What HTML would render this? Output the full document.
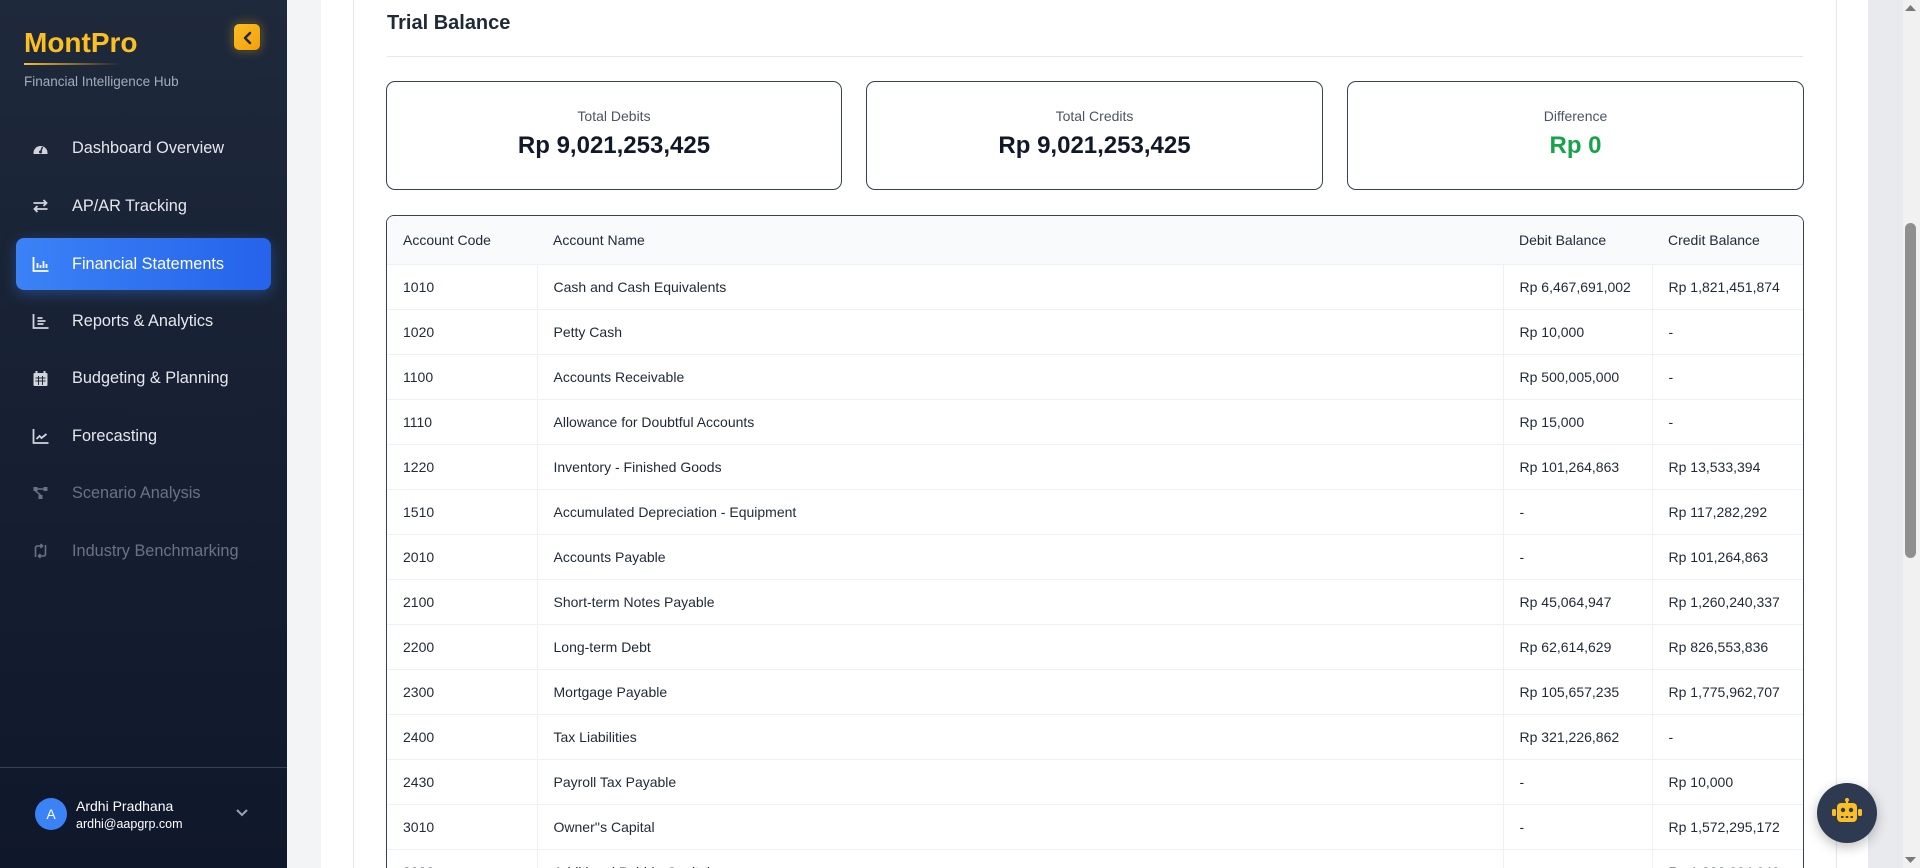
<!DOCTYPE html>
<html><head><meta charset="utf-8"><style>
*{margin:0;padding:0;box-sizing:border-box}
html{width:1920px;height:868px;overflow:hidden}
body{width:1920px;height:868px;overflow:hidden;font-family:"Liberation Sans",Arial,sans-serif;background:#f3f4f6;position:relative}
.sb{position:absolute;left:0;top:0;width:287px;height:868px;background:linear-gradient(180deg,#1e293b 0%,#172033 50%,#0f172a 100%)}
.logo{position:absolute;left:24px;top:27px;font-size:28px;font-weight:bold;color:#fbbf24}
.uline{position:absolute;left:24px;top:63px;width:96px;height:2px;background:linear-gradient(90deg,#fbbf24,rgba(251,191,36,0))}
.sub{position:absolute;left:24px;top:74px;font-size:13.5px;color:#a3acb9}
.tog{position:absolute;left:233px;top:23px;width:28px;height:28px;border-radius:6px;background:linear-gradient(135deg,#fbbf24,#f59e0b);box-shadow:0 0 10px rgba(251,191,36,.35);border:1px solid #3a3a2a}
.nav{position:absolute;left:16px;width:255px;height:52px;display:flex;align-items:center;font-size:16.3px;color:#e5e7eb}
.nav svg{position:absolute;left:16px;top:18px}
.nav span{position:absolute;left:56px}
.nav.act{background:linear-gradient(90deg,#3b82f6,#2563eb);border-radius:8px;color:#fff;box-shadow:0 4px 14px rgba(59,130,246,.35)}
.nav.dim{color:#6b7280}
.div{position:absolute;left:0;top:767px;width:287px;height:1px;background:#334155}
.av{position:absolute;left:35px;top:798px;width:32px;height:32px;border-radius:50%;background:#3b82f6;color:#fff;font-size:14px;text-align:center;line-height:32px}
.nm{position:absolute;left:76px;top:798px;font-size:14px;color:#fff}
.em{position:absolute;left:76px;top:817px;font-size:12.5px;color:#fff}
.panel{position:absolute;left:321px;top:0;width:1547px;height:868px;background:#fff}
.card{position:absolute;left:353px;top:0;width:1484px;height:868px;background:#fff;border-left:1px solid #e5e7eb;border-right:1px solid #e5e7eb}
.title{position:absolute;left:387px;top:12px;font-size:20px;font-weight:bold;color:#1f2937}
.hr{position:absolute;left:387px;top:56px;width:1416px;height:1px;background:#e5e7eb}
.stat{position:absolute;top:81px;height:109px;border:1px solid #374151;border-radius:9px;text-align:center}
.stat .l{margin-top:26px;font-size:14px;color:#4b5563}
.stat .v{margin-top:8px;font-size:24px;font-weight:bold;color:#111827}
.tbl{position:absolute;left:386px;top:215px;width:1418px;height:653px;border:1px solid #374151;border-bottom:none;border-radius:8px 8px 0 0;overflow:hidden}
table{border-collapse:collapse;width:100%;font-size:14px;color:#1f2937}
th{height:48px;background:#f8fafc;font-weight:normal;text-align:left;color:#1f2937;padding-left:16px}
td{height:45px;border-top:1px solid #eef0f3;padding-left:16px}
td+td{border-left:1px solid #eef0f3}
.bot{position:absolute;left:1817px;top:783px;width:60px;height:60px;border-radius:50%;background:#2d3a50;box-shadow:0 4px 12px rgba(0,0,0,.25)}
.gs{position:absolute;left:1868px;top:0;width:35px;height:868px;background:#e9eaee}
.scr{position:absolute;left:1903px;top:0;width:17px;height:868px;background:#f1f1f1}
.thumb{position:absolute;left:1905px;top:223px;width:11px;height:335px;border-radius:6px;background:#8f8f8f}
</style></head><body>
<div class="sb">
<div class="logo">MontPro</div><div class="uline"></div>
<div class="sub">Financial Intelligence Hub</div>
<div class="tog"><svg width="28" height="28" viewBox="0 0 28 28"><path d="M16 9l-5 5 5 5" fill="none" stroke="#1f2937" stroke-width="2.5" stroke-linecap="round" stroke-linejoin="round"/></svg></div>

<div class="nav" style="top:122px"><svg width="17" height="16" viewBox="0 0 16 16"><path d="M1 13A7 7 0 0 1 15 13L15 14H1Z" fill="#d1d5db"/><circle cx="8" cy="12" r="1.5" fill="#1e293b"/><path d="M8 12L10 7" stroke="#1e293b" stroke-width="1.5"/></svg><span>Dashboard Overview</span></div>
<div class="nav" style="top:180px"><svg width="17" height="16" viewBox="0 0 16 16"><path d="M1 5H14M11 2l3 3-3 3M15 11H2M5 8l-3 3 3 3" fill="none" stroke="#d1d5db" stroke-width="1.8"/></svg><span>AP/AR Tracking</span></div>
<div class="nav act" style="top:238px"><svg width="17" height="16" viewBox="0 0 16 16"><path d="M1 1V15H16" fill="none" stroke="#fff" stroke-width="1.8"/><path d="M5 7V12M8 9V12M11 5V12M14 8V12" stroke="#fff" stroke-width="1.8"/></svg><span>Financial Statements</span></div>
<div class="nav" style="top:295px"><svg width="17" height="16" viewBox="0 0 16 16"><path d="M1 1V15H16M5 5H10M5 8H13M5 11H11" fill="none" stroke="#d1d5db" stroke-width="1.8"/></svg><span>Reports &amp; Analytics</span></div>
<div class="nav" style="top:352px"><svg width="17" height="16" viewBox="0 0 16 16"><rect x="1" y="3" width="14" height="13" rx="1" fill="#d1d5db"/><path d="M4 1V4M12 1V4" stroke="#d1d5db" stroke-width="2"/><path d="M3 8H13M3 11H13M6 6V15M10 6V15" stroke="#1e293b" stroke-width="1"/></svg><span>Budgeting &amp; Planning</span></div>
<div class="nav" style="top:410px"><svg width="17" height="16" viewBox="0 0 16 16"><path d="M1 1V15H16" fill="none" stroke="#d1d5db" stroke-width="1.8"/><path d="M4 11L7 8 9 10 14 6" fill="none" stroke="#d1d5db" stroke-width="1.8"/></svg><span>Forecasting</span></div>
<div class="nav dim" style="top:467px"><svg width="17" height="16" viewBox="0 0 16 16"><rect x="1" y="2" width="4" height="4" fill="#6b7280"/><rect x="11" y="2" width="4" height="4" fill="#6b7280"/><rect x="6" y="10" width="4" height="4" fill="#6b7280"/><path d="M5 4H11M3 6L8 10" stroke="#6b7280" stroke-width="1.5"/></svg><span>Scenario Analysis</span></div>
<div class="nav dim" style="top:525px"><svg width="17" height="16" viewBox="0 0 16 16"><path d="M3 14V5Q3 3 5 3H10M8 1l2 2-2 2M13 2V11Q13 13 11 13H6M8 15l-2-2 2-2" fill="none" stroke="#6b7280" stroke-width="1.6"/></svg><span>Industry Benchmarking</span></div>
<div class="div"></div>
<div class="av">A</div>
<div class="nm">Ardhi Pradhana</div>
<div class="em">ardhi@aapgrp.com</div>
<svg style="position:absolute;left:235px;top:808px" width="14" height="10" viewBox="0 0 14 10"><path d="M2 2l5 5 5-5" fill="none" stroke="#9ca3af" stroke-width="2"/></svg>
</div>

<div class="panel"></div>
<div class="card"></div>
<div class="title">Trial Balance</div>
<div class="hr"></div>
<div class="stat" style="left:386px;width:456px"><div class="l">Total Debits</div><div class="v">Rp 9,021,253,425</div></div>
<div class="stat" style="left:866px;width:457px"><div class="l">Total Credits</div><div class="v">Rp 9,021,253,425</div></div>
<div class="stat" style="left:1347px;width:457px"><div class="l">Difference</div><div class="v" style="color:#16a34a">Rp 0</div></div>

<div class="tbl"><table>
<colgroup><col style="width:150px"><col style="width:966px"><col style="width:149px"><col></colgroup>
<tr><th>Account Code</th><th>Account Name</th><th>Debit Balance</th><th>Credit Balance</th></tr>
<tr><td>1010</td><td>Cash and Cash Equivalents</td><td>Rp 6,467,691,002</td><td>Rp 1,821,451,874</td></tr>
<tr><td>1020</td><td>Petty Cash</td><td>Rp 10,000</td><td>-</td></tr>
<tr><td>1100</td><td>Accounts Receivable</td><td>Rp 500,005,000</td><td>-</td></tr>
<tr><td>1110</td><td>Allowance for Doubtful Accounts</td><td>Rp 15,000</td><td>-</td></tr>
<tr><td>1220</td><td>Inventory - Finished Goods</td><td>Rp 101,264,863</td><td>Rp 13,533,394</td></tr>
<tr><td>1510</td><td>Accumulated Depreciation - Equipment</td><td>-</td><td>Rp 117,282,292</td></tr>
<tr><td>2010</td><td>Accounts Payable</td><td>-</td><td>Rp 101,264,863</td></tr>
<tr><td>2100</td><td>Short-term Notes Payable</td><td>Rp 45,064,947</td><td>Rp 1,260,240,337</td></tr>
<tr><td>2200</td><td>Long-term Debt</td><td>Rp 62,614,629</td><td>Rp 826,553,836</td></tr>
<tr><td>2300</td><td>Mortgage Payable</td><td>Rp 105,657,235</td><td>Rp 1,775,962,707</td></tr>
<tr><td>2400</td><td>Tax Liabilities</td><td>Rp 321,226,862</td><td>-</td></tr>
<tr><td>2430</td><td>Payroll Tax Payable</td><td>-</td><td>Rp 10,000</td></tr>
<tr><td>3010</td><td>Owner''s Capital</td><td>-</td><td>Rp 1,572,295,172</td></tr>
<tr><td>3020</td><td>Additional Paid-in Capital</td><td>-</td><td>Rp 1,000,004,940</td></tr>
</table></div>

<div class="gs"></div>
<div class="scr"></div>
<div class="thumb"></div>
<svg style="position:absolute;left:1905px;top:4px" width="11" height="8"><path d="M0 7L5.5 1 11 7Z" fill="#7a7a7a"/></svg>
<svg style="position:absolute;left:1905px;top:856px" width="11" height="8"><path d="M0 1L5.5 7 11 1Z" fill="#7a7a7a"/></svg>
<div class="bot"><svg style="position:absolute;left:14px;top:15px" width="32" height="28" viewBox="0 0 32 28"><rect x="15" y="0" width="2" height="5" fill="#fbbf24"/><circle cx="16" cy="2" r="2" fill="#fbbf24"/><rect x="6" y="5" width="20" height="19" rx="4" fill="#fbbf24"/><rect x="1" y="11" width="4" height="7" rx="1.5" fill="#fbbf24"/><rect x="27" y="11" width="4" height="7" rx="1.5" fill="#fbbf24"/><circle cx="12" cy="12" r="2.2" fill="#2d3a50"/><circle cx="20" cy="12" r="2.2" fill="#2d3a50"/><rect x="10" y="18" width="2.5" height="2" fill="#2d3a50"/><rect x="14.75" y="18" width="2.5" height="2" fill="#2d3a50"/><rect x="19.5" y="18" width="2.5" height="2" fill="#2d3a50"/></svg></div>
</body></html>
